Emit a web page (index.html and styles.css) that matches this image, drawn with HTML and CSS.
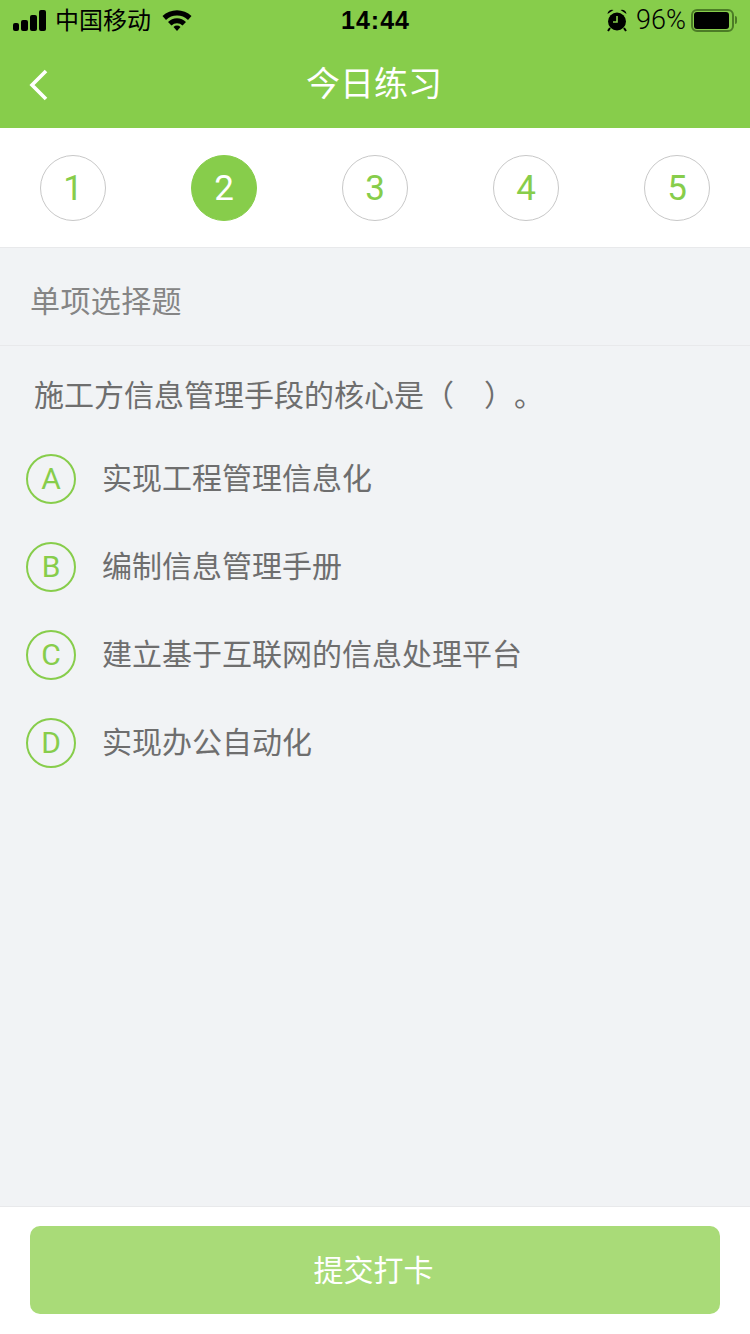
FILE: index.html
```html
<!DOCTYPE html>
<html lang="zh-CN">
<head>
  <meta charset="UTF-8">
  <title>今日练习</title>
  <link rel="stylesheet" href="styles.css">
</head>
<body>
  <div class="page">
    <header class="header">
      <div class="status-bar">
        <div class="status-left">
          <div class="signal">
            <span class="bar bar-1"></span>
            <span class="bar bar-2"></span>
            <span class="bar bar-3"></span>
            <span class="bar bar-4"></span>
          </div>
          <span class="carrier">中国移动</span>
          <svg class="wifi" width="30" height="22" viewBox="0 0 30 22">
            <path d="M0.5 7 A21 21 0 0 1 29.5 7 L26 11 A16 16 0 0 0 4 11 Z" fill="#000"/>
            <path d="M6 13 A12.5 12.5 0 0 1 24 13 L20.5 16.5 A8 8 0 0 0 9.5 16.5 Z" fill="#000"/>
            <path d="M11.5 18 A5 5 0 0 1 18.5 18 L15 22 Z" fill="#000"/>
          </svg>
        </div>
        <span class="clock">14:44</span>
        <div class="status-right">
          <svg class="alarm" width="22" height="24" viewBox="0 0 22 24">
            <circle cx="11" cy="13.5" r="9" fill="#000"/>
            <path d="M1.5 6 A4.5 4.5 0 0 1 7.5 2 Z" fill="#000"/>
            <path d="M20.5 6 A4.5 4.5 0 0 0 14.5 2 Z" fill="#000"/>
            <path d="M4 20 L2 23 M18 20 L20 23" stroke="#000" stroke-width="2"/>
            <path d="M11 8 V14 H7" stroke="#87cd4b" stroke-width="1.6" fill="none"/>
          </svg>
          <span class="battery-text">96%</span>
          <div class="battery">
            <div class="battery-level"></div>
          </div>
          <span class="battery-cap"></span>
        </div>
      </div>
      <div class="nav">
        <svg class="back" width="22" height="34" viewBox="0 0 22 34">
          <path d="M18 3 L4 17 L18 31" stroke="#fff" stroke-width="3.6" fill="none"/>
        </svg>
        <h1 class="title">今日练习</h1>
      </div>
    </header>

    <div class="steps">
      <div class="step">1</div>
      <div class="step active">2</div>
      <div class="step">3</div>
      <div class="step">4</div>
      <div class="step">5</div>
    </div>

    <main class="content">
      <div class="type">单项选择题</div>
      <div class="question">施工方信息管理手段的核心是（　）。</div>
      <div class="options">
        <div class="option"><span class="letter">A</span><span class="option-text">实现工程管理信息化</span></div>
        <div class="option"><span class="letter">B</span><span class="option-text">编制信息管理手册</span></div>
        <div class="option"><span class="letter">C</span><span class="option-text">建立基于互联网的信息处理平台</span></div>
        <div class="option"><span class="letter">D</span><span class="option-text">实现办公自动化</span></div>
      </div>
    </main>

    <footer class="footer">
      <button class="submit">提交打卡</button>
    </footer>
  </div>
</body>
</html>
```

FILE: styles.css
```css
* {
  box-sizing: border-box;
}
body {
  margin: 0;
  font-family: "Liberation Sans", "Noto Sans CJK SC", sans-serif;
  background-color: #f1f3f5;
}
.page {
  display: flex;
  flex-direction: column;
  height: 1334px;
  overflow: hidden;
}
.header {
  height: 128px;
  background-color: #87cd4b;
}
.status-bar {
  position: relative;
  display: flex;
  justify-content: space-between;
  align-items: center;
  height: 40px;
  padding: 0 13px 0 13px;
  color: #000;
}
.status-left {
  display: flex;
  align-items: center;
}
.signal {
  display: flex;
  align-items: flex-end;
  gap: 2px;
  height: 21px;
  margin-right: 9px;
}
.bar {
  width: 7px;
  border-radius: 2px;
  background-color: #000;
}
.bar-1 { width: 6px; height: 8px; }
.bar-2 { height: 11px; }
.bar-3 { height: 16px; }
.bar-4 { height: 21px; }
.carrier {
  font-size: 24px;
  line-height: 40px;
  padding-top: 2px;
}
.wifi {
  margin-left: 11px;
}
.clock {
  position: absolute;
  left: 1px;
  right: 0;
  text-align: center;
  font-size: 25px;
  font-weight: bold;
  letter-spacing: 1px;
}
.status-right {
  display: flex;
  align-items: center;
}
.alarm {
  margin-right: 8px;
}
.battery-text {
  font-family: Roboto, sans-serif;
  font-weight: 300;
  font-size: 27px;
  margin-right: 5px;
}
.battery {
  width: 43px;
  height: 23px;
  padding: 1px 3px 1px 1px;
  border: 2px solid #4c7c26;
  border-radius: 6px;
}
.battery-level {
  height: 100%;
  border-radius: 3px;
  background-color: #000;
}
.battery-cap {
  width: 2px;
  height: 8px;
  margin-left: 1px;
  border-radius: 0 2px 2px 0;
  background-color: #4c7c26;
}
.nav {
  position: relative;
  display: flex;
  align-items: center;
  justify-content: center;
  height: 88px;
}
.back {
  position: absolute;
  left: 28px;
  top: 28px;
}
.title {
  margin: 0 2px 5px 0;
  font-size: 34px;
  font-weight: normal;
  color: #fff;
}
.steps {
  display: flex;
  justify-content: space-between;
  height: 120px;
  padding: 27px 40px 0;
  background-color: #fff;
  border-bottom: 1px solid #e8e9eb;
}
.step {
  display: flex;
  align-items: center;
  justify-content: center;
  width: 66px;
  height: 66px;
  border: 1px solid #c8c8c8;
  border-radius: 50%;
  font-family: Roboto, sans-serif;
  font-size: 35px;
  color: #87cd4b;
}
.step.active {
  border-color: #87cd4b;
  background-color: #87cd4b;
  color: #fff;
}
.content {
  flex: 1;
}
.type {
  height: 98px;
  padding-left: 30px;
  border-bottom: 1px solid #e8e9eb;
  font-size: 30px;
  letter-spacing: 0.4px;
  line-height: 108px;
  color: #858585;
}
.question {
  padding: 30px 0 0 34px;
  font-size: 30px;
  line-height: 40px;
  color: #6e6e6e;
  text-spacing-trim: space-all;
}
.options {
  display: flex;
  flex-direction: column;
  gap: 38px;
  padding: 38px 0 0 26px;
}
.option {
  display: flex;
  align-items: center;
  height: 50px;
}
.letter {
  display: flex;
  align-items: center;
  justify-content: center;
  width: 50px;
  height: 50px;
  padding-bottom: 2px;
  border: 2px solid #87cd4b;
  border-radius: 50%;
  font-family: Roboto, sans-serif;
  font-size: 30px;
  color: #87cd4b;
}
.option-text {
  margin: 0 0 7px 26px;
  font-size: 30px;
  color: #6e6e6e;
}
.footer {
  height: 128px;
  padding: 19px 30px 0;
  background-color: #fff;
  border-top: 1px solid #e8e9eb;
}
.submit {
  display: block;
  width: 100%;
  height: 88px;
  padding: 0 3px 4px 0;
  border: none;
  border-radius: 10px;
  background-color: #a9db78;
  font-family: inherit;
  font-size: 30px;
  color: #fff;
}
```
